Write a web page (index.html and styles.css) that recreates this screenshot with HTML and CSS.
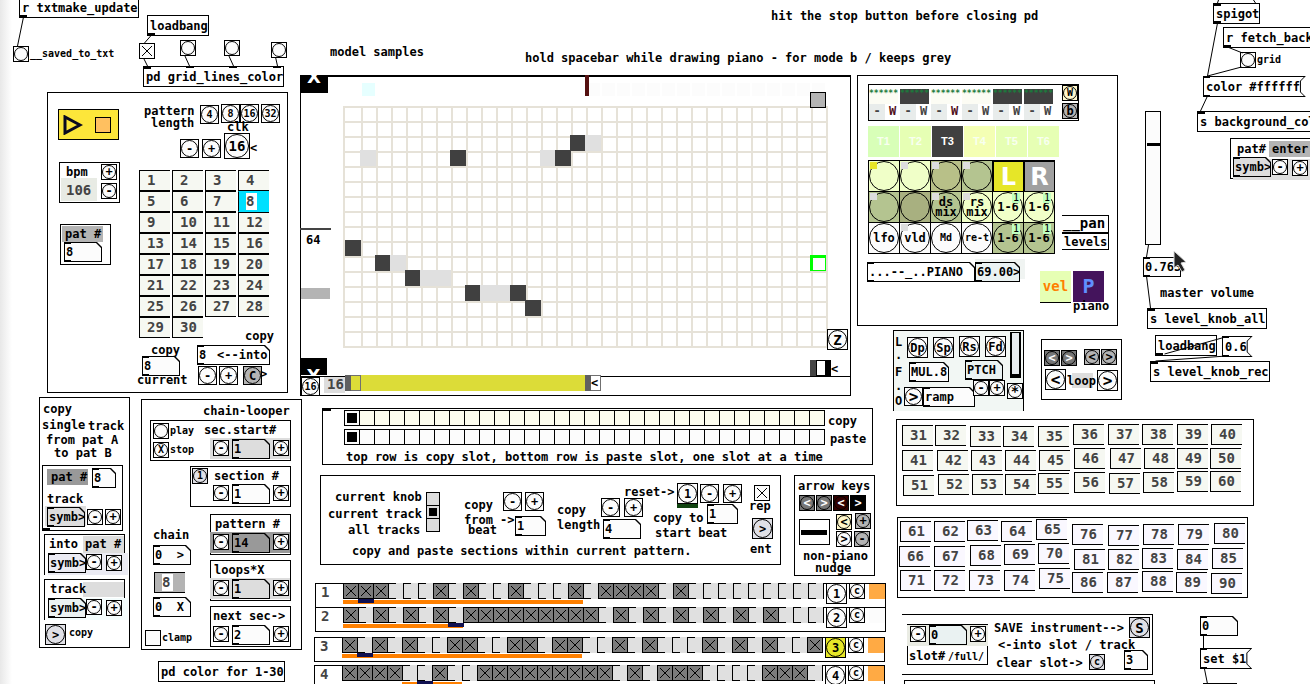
FILE: index.html
```
<!DOCTYPE html>
<html lang="en">
<head>
    <meta charset="UTF-8">
    <meta name="viewport" content="width=device-width, initial-scale=1.0">
    <title>Pattern sequencer</title>
    <link rel="stylesheet" href="styles.css">
</head>
<body>
    <main id="patch"></main>
    <script src="patch.js"></script>
</body>
</html>
```
FILE: styles.css
```
*{
    box-sizing: border-box;
    margin: 0;
    padding: 0;
}
body{
    background: linear-gradient(to right, #e8e8e8, #fff 12px);
    font: bold 12px/14px "DejaVu Sans Mono", monospace;
    color: #000;
}
button,
input{
    font: inherit;
    color: inherit;
    border-radius: 0;
    appearance: none;
}
#patch{
    position: relative;
    min-height: 100vh;
    overflow: hidden;
}
/* every object has its own place in the patch */
.node{
    position: absolute;
}
.wires{
    left: 0;
    top: 0;
    width: 100%;
    height: 100%;
    stroke: #000;
    fill: none;
    pointer-events: none;
}
.txt{
    white-space: pre;
}
.small{
    font-size: 10px;
}
.big{
    font-size: 14px;
    color: #444;
}
.black{
    color: #000;
}
.panel{
    border: 1px solid #000;
    background: #fff;
}
.open-left{
    border-left: 0;
}
.open-bottom{
    border-bottom: 0;
}
.thick-top{
    border-top-width: 2px;
}
.pale{
    background: #f2f7f4;
}
.arrow-end{
    overflow: hidden;
    background: #000;
    color: #fff;
    text-align: center;
    font: bold 18px/18px "DejaVu Sans", sans-serif;
}
.arrow-end.top{
    line-height: 4px;
}
.arrow-end.bottom{
    line-height: 36px;
}

/* object and message boxes */
.obj{
    height: 21px;
    padding: 3px 0 0 2px;
    border: 1px solid #000;
    background: #fff;
    white-space: pre;
}
.in::before,
.out::after,
.nbx::before,
.nbx::after{
    content: "";
    position: absolute;
    z-index: 1;
    left: 0;
    width: 7px;
    height: 2px;
    background: #000;
}
.in::before,
.nbx::before{
    top: 0;
}
.out::after,
.nbx::after{
    bottom: 0;
}
.msg{
    height: 21px;
    padding: 1px;
    background: #000;
    clip-path: polygon(0 0, 100% 0, calc(100% - 5px) 5px, calc(100% - 5px) 16px, 100% 100%, 0 100%);
}
.msg button{
    display: block;
    height: 19px;
    padding: 0 5px 0 2px;
    border: 0;
    background: #fff;
    clip-path: polygon(0 0, calc(100% - 1px) 0, calc(100% - 5px) 4px, calc(100% - 5px) 15px, calc(100% - 1px) 100%, 0 100%);
}

/* number boxes */
.nbx{
    height: 20px;
    padding: 1px;
    background: #000;
    clip-path: polygon(0 0, calc(100% - 5px) 0, 100% 5px, 100% 100%, 0 100%);
}
.nbx input{
    display: block;
    width: 100%;
    height: 18px;
    padding-left: 1px;
    border: 0;
    background: #fcfcfc;
    clip-path: polygon(0 0, calc(100% - 5px) 0, 100% 5px, 100% 100%, 0 100%);
}
.nbx.wide input{
    background: #fff;
}
.nbx.grey input{
    background: #ddd;
}
.nbx.dark input{
    background: #999;
}
.nbx.lilac input{
    background: #ebebf3;
}
.nbx.mint input{
    background: #eaf2f2;
}

/* bangs */
.bang{
    display: flex;
    align-items: center;
    justify-content: center;
    width: 16px;
    height: 16px;
    border: 1px solid #000;
    background: #fcfcfc;
    line-height: 12px;
}
.bang::before{
    content: "";
    position: absolute;
    inset: 0;
    border: 1px solid #000;
    border-radius: 50%;
}
.b18{
    width: 19px;
    height: 19px;
}
.b21{
    width: 21px;
    height: 21px;
}
.b26{
    width: 26px;
    height: 26px;
}
.b26,
.mid-size{
    font-size: 14px;
}
.large{
    font-size: 16px;
}
.silver{
    background: #e0e0e6;
}
.mid{
    background: #b4b4b4;
}
.cream{
    background: #fff8cc;
}
.lit{
    background: #e6e628;
}
.slate{
    background: #777;
    color: #fff;
}
.wine{
    background: #300;
    color: #fff;
}
.ink{
    background: #000;
    color: #fff;
}

/* toggles */
.tgl{
    display: block;
    width: 16px;
    height: 16px;
    border: 1px solid #000;
    background: #fcfcfc;
}
.tgl:checked,
.steps input:checked{
    background-image:
        linear-gradient(to top right, transparent 47%, #000 47%, #000 53%, transparent 53%),
        linear-gradient(to bottom right, transparent 47%, #000 47%, #000 53%, transparent 53%);
    background-repeat: no-repeat;
    background-position: center;
    background-size: 10px 10px;
}

/* pattern pads */
.pad{
    width: 31px;
    height: 21px;
    padding-left: 7px;
    border: 1px solid #000;
    border-right: 0;
    background: #f6f8f2;
    font-size: 14px;
    line-height: 19px;
    text-align: left;
    color: #444;
}
.pad.violet{
    background: #faf8ff;
}
.pad.off{
    background: #b4b4b4;
}
.pad.on{
    background: #00e0ff;
    border-color: #00e0ff;
    border-left-color: #000;
}
.pad.on span,
.pad.off span{
    display: inline-block;
    width: 11px;
    height: 17px;
    line-height: 17px;
    background: #fff;
}
.pads{
    display: grid;
    grid-template-columns: repeat(4, 31px);
    column-gap: 2px;
}

/* colour blocks */
.c-bpm{background: #e8ebe4;}
.c-grey{background: #b4b4b4;}
.c-dark{background: #999;}
.c-light{background: #ddd;}
.c-lilac{background: #ebebf3;}
.c-mint{background: #f4fdfd;}
.c-cyan{background: #e6ffff;}
.c-red{background: #551111;}
.c-green{background: #114411;}
.c-black{background: #000;}
.c-char{background: #444;}
.c-mist{background: #f0f4f2;}
.c-slot{background: #eaece4; border-top: 1px solid #000;}
.c-faint{
    background: repeating-linear-gradient(to right, #fcfcfc 0, #fcfcfc 13px, #fff 13px, #fff 15px);
}

.play{
    display: flex;
    align-items: center;
    justify-content: space-between;
    padding: 0 7px 0 4px;
    border: 1px solid #000;
    background: #fde63a;
}
.play svg{
    width: 20px;
    height: 20px;
}
.play i{
    width: 16px;
    height: 16px;
    border: 1px solid #000;
    background: #ffc060;
}

/* piano roll */
.roll{
    display: grid;
    grid-template-columns: repeat(32, 15px);
    grid-template-rows: repeat(16, 15px);
    padding-left: 3px;
    border-left: 2px solid #e6e2d8;
    border-bottom: 2px solid #e6e2d8;
    background:
        repeating-linear-gradient(to right, transparent 0, transparent 13px, #e6e2d8 13px, #e6e2d8 15px) content-box,
        repeating-linear-gradient(to bottom, #e6e2d8 0, #e6e2d8 2px, transparent 2px, transparent 15px) padding-box;
}
.note{
    width: 16px;
    height: 16px;
    margin: -1px 0 0 -3px;
    background: #404040;
}
.note.tail{
    background: #e0e0e0;
}
.note.cursor{
    border: 1px solid #0f0;
    border-width: 3px 1px 1px 3px;
    background: #fff;
}
.range{
    display: flex;
    width: 256px;
    height: 16px;
    background: #dcdc38;
}
.range i{
    width: 6px;
    background: #606060;
}
.range b{
    width: 10px;
    border: 1px solid #707070;
    border-left: 0;
}
.range .end{
    margin-left: auto;
}
.range .tip{
    background: #fff;
    line-height: 14px;
}

/* sliders */
.vsl{
    border: 1px solid #000;
    background: #fcfcfc;
    writing-mode: vertical-lr;
    direction: rtl;
}
.vsl::-webkit-slider-thumb{
    appearance: none;
    width: 13px;
    height: 3px;
    background: #000;
}
.vsl.lfo{
    border-width: 1px 2px;
    background: #e8ecf0;
}
.vsl.lfo::-webkit-slider-thumb{
    width: 7px;
}

/* track slots */
.slots{
    display: grid;
    grid-template-columns: repeat(6, 31px);
    padding-left: 1px;
}
.slot{
    display: grid;
    grid-template-columns: 16px 15px;
    grid-template-rows: 19px 16px;
    color: #444;
    text-align: center;
    line-height: 15px;
}
.slot i{
    grid-column: 1 / 3;
    margin: 4px 2px 0 0;
    font: bold 8px/10px "DejaVu Sans Mono", monospace;
    color: #1c7a3c;
    background: #fcfcf4;
}
.slot.filled i{
    background: #404040;
}
.slot b{
    background: #e8eceb;
}
.slot em{
    font-style: normal;
}
.slot.used em{
    color: #501020;
}
.tabs{
    display: grid;
    grid-template-columns: repeat(6, 31px);
    column-gap: 1px;
}
.tabs button{
    height: 31px;
    border: 0;
    background: #e6ffb4;
    color: #f8fff0;
    font: bold 11px/31px "Liberation Sans", sans-serif;
}
.tabs .t1{background: #d8ffb8;}
.tabs .t3{background: #404040; color: #fff;}
.tabs .t4{background: #f4ffb4;}

/* knobs */
.knobs{
    display: grid;
    grid-template-columns: repeat(6, 31px);
    border-right: 1px solid #000;
    border-bottom: 1px solid #000;
}
.knob{
    position: relative;
    display: flex;
    align-items: center;
    justify-content: center;
    height: 31px;
    border: 1px solid #000;
    border-right: 0;
    border-bottom: 0;
    background: #fcfcfc;
    line-height: 10px;
}
.knob::before{
    content: "";
    position: absolute;
    inset: 0;
    border: 1px solid #000;
    border-radius: 50%;
}
.knob i{
    position: absolute;
    left: 1px;
    top: 1px;
    width: 7px;
    height: 7px;
    background: #ddd;
}
.knob i.lit{
    background: #e6e628;
}
.knob u{
    position: absolute;
    right: 3px;
    top: 1px;
    width: 8px;
    background: #c0ffc0;
    font-weight: normal;
    font-size: 10px;
    text-decoration: none;
}
.knob.lime{background: #f0ffc8;}
.knob.olive{background: #b8c088;}
.knob.sage{background: #b4c490;}
.knob.moss{background: #a8b080;}
.knob.left{background: #e6e628;}
.knob.right{background: #a0a0a0;}
.knob.left,
.knob.right{
    border-width: 2px 1px 1px 2px;
    color: #fff;
    font: bold 24px/24px "DejaVu Sans", sans-serif;
}
.knob.left::before,
.knob.right::before{
    display: none;
}
.tile{
    width: 31px;
    height: 31px;
    border: 0;
    font-size: 14px;
}
.tile.vel{
    background: #e6ffb4;
    color: #ff8000;
    line-height: 23px;
    box-shadow: 0 1px #000;
}
.tile.inst{
    background: #44145c;
    color: #6090ff;
    font-size: 20px;
    line-height: 25px;
}

/* radio rows */
.radio{
    display: flex;
    border: 1px solid #000;
}
.radio input{
    width: 15px;
    height: 14px;
    border-right: 1px solid #000;
    background: #fcfcfc;
}
.radio input:last-child{
    width: 14px;
    border-right: 0;
}
.radio.ivory input{
    background: #fcfcee;
}
.radio input:checked{
    background: #fcfcfc linear-gradient(#000, #000) no-repeat center / 10px 10px;
}
.radio.col{
    flex-direction: column;
}
.radio.col input{
    width: 12px;
    height: 13px;
    border-right: 0;
    border-bottom: 1px solid #000;
    background-color: #ddd;
}
.radio.col input:last-child{
    height: 12px;
    border-bottom: 0;
}
.radio.col input:checked{
    background-size: 8px 8px;
}

/* tracks */
.track{
    display: flex;
    align-items: flex-start;
    width: 571px;
    height: 25px;
    border: 1px solid #000;
    background: #fff;
}
.track > span{
    width: 27px;
    padding-left: 5px;
    font-size: 14px;
    line-height: 17px;
    color: #444;
}
.steps{
    position: relative;
    display: flex;
    margin-top: -1px;
    border-right: 1px solid #000;
}
.steps input{
    width: 15px;
    height: 16px;
    border-left: 1px solid #000;
    background:
        linear-gradient(#000, #000) no-repeat left top / 7px 1px,
        linear-gradient(#000, #000) no-repeat left bottom / 7px 1px,
        #e0e0e0;
}
.steps input:checked{
    border-top: 1px solid #000;
    border-bottom: 1px solid #000;
    background-color: #7c7c7c;
}
.loop,
.head{
    position: absolute;
    top: 17px;
    height: 4px;
    background: #ff8000;
}
.head{
    top: 16px;
    width: 16px;
    background: #101050;
}
.track .bang{
    position: relative;
    margin: -1px 0 0 2px;
}
.track .light{
    width: 16px;
    height: 15px;
    margin-left: auto;
    background: #ffaa44;
}
.track.idle .light{
    background: #fcfcfc;
}
```
FILE: patch.js
```
var patch = document.getElementById("patch");

// create an element and put it at its place in the patch
function node(tag, cls, x, y, w, h){
    var el = document.createElement(tag);
    el.className = "node " + cls;
    el.style.left = x + "px";
    el.style.top = y + "px";
    if(w) el.style.width = w + "px";
    if(h) el.style.height = h + "px";
    patch.appendChild(el);
    return el;
}
// y is the middle of the letters
function txt(x, y, str, cls){
    node("span", "txt " + (cls || ""), x, y - 7).textContent = str;
}
function panel(x, y, w, h, cls){
    node("div", "panel " + (cls || ""), x, y, w, h);
}
function rect(x, y, w, h, cls){
    node("div", cls, x, y, w, h);
}
function obj(x, y, str, cls){
    node("div", "obj " + (cls || ""), x, y).textContent = str;
}
function msg(x, y, str){
    node("div", "msg in out", x, y).innerHTML = "<button>" + str + "</button>";
}
function bang(x, y, label, cls){
    var b = node("button", "bang " + (cls || ""), x, y);
    b.textContent = label || "";
    if(!label) b.setAttribute("aria-label", "bang");
}
function nbx(x, y, w, value, cls){
    var n = node("div", "nbx " + (cls || ""), x, y, w);
    n.innerHTML = '<input type="text" aria-label="number" value="' + value + '">';
}
function pad(x, y, n, cls){
    node("button", "pad " + (cls || ""), x, y).innerHTML = "<span>" + n + "</span>";
}
function toggle(x, y, on, name){
    var t = node("input", "tgl", x, y);
    t.type = "checkbox";
    t.checked = on;
    t.setAttribute("aria-label", name);
}
function radio(x, y, name, count, chosen, cls){
    var html = "";
    for(var i = 0; i < count; i++){
        html += '<input type="radio" name="' + name + '" aria-label="' + name + " " + (i + 1) + '"' + (i == chosen ? " checked" : "") + ">";
    }
    node("div", "radio " + (cls || ""), x, y).innerHTML = html;
}
function vslider(x, y, w, h, value, cls){
    var s = node("input", "vsl " + (cls || ""), x, y, w, h);
    s.type = "range";
    s.value = value;
    s.setAttribute("aria-label", "level");
}
// minus, number and plus, as used all over the chain looper
function stepper(y, value, cls, back){
    if(back) rect(210, y - 1, 80, 21, back);
    bang(213, y + 1, "-");
    nbx(232, y, 38, value, cls);
    bang(273, y + 1, "+");
}

// top left
obj(19, -3, "r txtmake_update", "out");
bang(13, 46);
txt(30, 54, "__saved_to_txt", "small");
obj(147, 15, "loadbang", "out");
toggle(139, 43, true, "grid lines");
bang(180, 40);
bang(224, 40);
bang(271, 42);
obj(143, 66, "pd grid_lines_color", "in");
rect(186, 66, 8, 2, "c-black");
rect(229, 66, 8, 2, "c-black");
rect(273, 66, 8, 2, "c-black");
txt(771, 16, "hit the stop button before closing pd");
txt(330, 52, "model samples");
txt(525, 58, "hold spacebar while drawing piano - for mode b / keeps grey");

// transport and patterns 1-30
panel(47, 92, 241, 301);
node("button", "play", 58, 109, 61, 31).innerHTML =
    '<svg viewBox="0 0 20 20" aria-label="play"><path d="M2 2V18L17 10Z" fill="#fde63a" stroke="#0a0a20" stroke-width="3"/></svg><i></i>';
txt(144, 111, "pattern");
txt(151, 123, "length");
bang(200, 105, "4", "b18 small");
bang(221, 104, "8", "b18 small");
bang(240, 104, "16", "b18 small");
bang(261, 104, "32", "b18 small");
txt(227, 127, "clk");
bang(180, 139, "-", "b18");
bang(202, 139, "+", "b18");
bang(224, 133, "16", "b26");
txt(250, 148, "<");
panel(59, 162, 61, 41);
txt(66, 172, "bpm");
rect(61, 178, 36, 23, "c-bpm");
txt(66, 190, "106", "big");
bang(101, 164, "+");
bang(101, 183, "-");
panel(60, 224, 51, 41);
rect(62, 226, 41, 16, "c-grey");
txt(65, 234, "pat #");
nbx(64, 242, 38, "8");

var pads = "";
for(var i = 1; i <= 30; i++){
    pads += '<button class="pad' + (i == 8 ? " on" : "") + '"><span>' + i + "</span></button>";
}
node("div", "pads", 139, 170).innerHTML = pads;
txt(245, 336, "copy");
txt(151, 350, "copy");
nbx(142, 356, 38, "8");
txt(137, 380, "current");
nbx(197, 345, 73, "8", "wide");
txt(217, 355, "<--into");
bang(198, 366, "-", "b18");
bang(219, 366, "+", "b18");
bang(243, 366, "C", "b18 mid");
txt(260, 374, ">");

// copy single track
panel(39, 397, 91, 251);
txt(43, 409, "copy");
txt(42, 425, "single");
txt(88, 426, "track");
txt(46, 440, "from pat A");
txt(54, 453, "to pat B");
panel(42, 465, 81, 66);
rect(47, 469, 41, 16, "c-dark");
txt(51, 477, "pat #");
nbx(92, 468, 24, "8");
txt(47, 499, "track");
rect(45, 506, 41, 20, "c-light");
nbx(47, 507, 38, "symb>", "grey");
rect(43, 528, 7, 3, "c-black");
bang(87, 509, "-");
bang(105, 509, "+");
panel(44, 534, 81, 41, "open-bottom");
rect(83, 536, 41, 17, "c-light");
txt(49, 544, "into pat #");
rect(48, 553, 80, 22, "c-lilac");
nbx(48, 553, 38, "symb>", "lilac");
bang(86, 554, "-");
bang(106, 555, "+");
panel(44, 579, 81, 41, "open-bottom");
rect(83, 582, 41, 15, "c-light");
txt(50, 589, "track");
rect(48, 598, 80, 22, "c-mint");
nbx(48, 598, 38, "symb>", "mint");
bang(86, 599, "-");
bang(106, 600, "+");
bang(45, 624, ">", "b21 silver");
txt(69, 633, "copy", "small");

// chain looper
panel(141, 399, 161, 251);
txt(203, 411, "chain-looper");
panel(150, 420, 141, 41);
bang(153, 423);
txt(170, 431, "play", "small");
bang(153, 442, "X", "small");
txt(170, 450, "stop", "small");
txt(204, 430, "sec.start#");
stepper(439, "1", "grey", "c-light");
panel(190, 466, 101, 41);
bang(192, 468, "1", "small silver");
txt(214, 476, "section #");
stepper(484, "1");
panel(210, 514, 81, 41);
txt(215, 524, "pattern #");
stepper(533, "14", "dark", "c-dark");
panel(210, 560, 81, 41);
txt(214, 570, "loops*X");
stepper(579, "1", "grey", "c-light");
panel(210, 606, 81, 41);
txt(213, 616, "next sec->");
stepper(625, "2");
txt(153, 535, "chain");
nbx(153, 545, 38, "0  &gt;");
pad(154, 572, 8, "off");
nbx(153, 597, 38, "0  X");
toggle(145, 630, false, "clamp");
txt(162, 638, "clamp", "small");
obj(158, 661, "pd color for 1-30");

// piano roll
panel(300, 75, 551, 321, "thick-top");
rect(300, 376, 551, 1, "c-black");
node("div", "arrow-end top", 300, 75, 28, 18).textContent = "X";
node("div", "arrow-end bottom", 300, 358, 27, 17).textContent = "X";
rect(362, 83, 13, 13, "c-cyan");
rect(587, 83, 238, 13, "c-faint");
rect(585, 75, 4, 21, "c-red");
rect(300, 228, 31, 2, "c-char");
txt(306, 240, "64");
rect(301, 288, 29, 11, "c-grey");

// column, row, kind
var notes = [
    [15, 2], [16, 2, "tail"],
    [1, 3, "tail"], [7, 3], [13, 3, "tail"], [14, 3],
    [0, 9],
    [2, 10], [3, 10, "tail"], [31, 10, "cursor"],
    [4, 11], [5, 11, "tail"], [6, 11, "tail"],
    [8, 12], [9, 12, "tail"], [10, 12, "tail"], [11, 12],
    [12, 13]
];
var roll = node("div", "roll", 343, 106);
notes.forEach(function(n){
    var el = document.createElement("div");
    el.className = "note " + (n[2] || "");
    el.style.gridColumn = n[0] + 1;
    el.style.gridRow = n[1] + 1;
    roll.appendChild(el);
});
panel(810, 92, 16, 16, "mid");
bang(301, 377, "16", "b18 small");
rect(324, 377, 21, 16, "c-light");
txt(327, 384, "16", "big");
node("div", "range", 345, 375).innerHTML = '<i></i><b></b><i class="end"></i><b class="tip">&lt;</b>';
bang(827, 329, "Z", "b21 mid-size");
rect(810, 360, 6, 16, "c-char");
panel(816, 360, 10, 16);
rect(826, 360, 5, 16, "c-black");
txt(831, 369, "<");

// track and knob panel
panel(857, 75, 261, 251);
panel(868, 84, 211, 37);
var slots = "";
["used", "filled", "used", "", "filled", "filled"].forEach(function(kind){
    slots += '<div class="slot ' + kind + '"><i>******</i><b>-</b><em>W</em></div>';
});
node("div", "slots", 868, 85).innerHTML = slots;
bang(1062, 85, "W", "small cream");
bang(1062, 103, "b", "mid");
var tabs = "";
for(i = 1; i <= 6; i++){
    tabs += '<button class="t' + i + '">T' + i + "</button>";
}
node("div", "tabs", 868, 126).innerHTML = tabs;

// colour, label, corner mark
var knobs = [
    ["lime", "", '<i class="lit"></i>'], ["lime", "", "<i></i>"], ["olive", "", "<i></i>"], ["sage", "", "<i></i>"], ["left", "L"], ["right", "R"],
    ["sage", "", "<i></i>"], ["moss", ""], ["sage", "ds<br>mix", "<i></i>"], ["lime", "rs<br>mix", "<i></i>"], ["lime", "1-6", "<u>1</u>"], ["lime", "1-6", "<u>1</u>"],
    ["", "lfo"], ["", "vld", "<i></i>"], ["small", "Md"], ["small", "re-t"], ["sage", "1-6", "<u>1</u>"], ["sage", "1-6", "<u>1</u>"]
];
node("div", "knobs", 868, 160).innerHTML = knobs.map(function(k, n){
    return '<button class="knob ' + k[0] + '" aria-label="' + (k[1].replace("<br>", " ") || "knob " + (n + 1)) + '">' + k[1] + (k[2] || "") + "</button>";
}).join("");
panel(1062, 215, 47, 18, "open-left");
txt(1063, 223, "__pan", "big black");
panel(1062, 233, 47, 17, "open-left");
txt(1064, 242, "levels");
nbx(867, 262, 108, "...--_..PIANO", "wide");
rect(975, 259, 50, 20, "c-mist");
nbx(975, 262, 45, "69.00>", "mint");
node("button", "tile vel", 1040, 271).textContent = "vel";
node("button", "tile inst", 1073, 271).textContent = "P";
txt(1073, 306, "piano");

// lfo
panel(893, 330, 131, 81, "pale open-bottom");
txt(895, 342, "L");
txt(895, 355, ".");
txt(895, 372, "F");
txt(895, 386, ".");
txt(895, 401, "O");
bang(907, 337, "Dp", "b21");
bang(933, 337, "Sp", "b21");
bang(959, 336, "Rs", "b21");
bang(985, 336, "Fd", "b21");
vslider(1010, 332, 11, 46, 0, "lfo");
nbx(909, 362, 40, "MUL.8");
nbx(965, 360, 38, "PTCH", "mint");
bang(904, 387, ">", "b18 large");
nbx(923, 387, 52, "ramp");
bang(973, 380, "-");
bang(989, 380, "+");
bang(1007, 383, "*", "mid-size");

// loop
panel(1041, 339, 81, 61);
bang(1044, 350, "<", "slate");
bang(1061, 350, ">", "slate");
bang(1084, 349, "<", "mid");
bang(1101, 349, ">", "mid");
bang(1045, 369, "<", "b21 large");
rect(1072, 373, 21, 15, "c-light");
txt(1067, 381, "loop");
bang(1097, 370, ">", "b21 large");

// copy and paste slots
panel(322, 408, 551, 57);
rect(323, 408, 8, 3, "c-black");
radio(344, 410, "copy slot", 32, 0, "ivory");
radio(344, 429, "paste slot", 32, 0);
txt(828, 421, "copy");
txt(830, 439, "paste");
txt(346, 457, "top row is copy slot, bottom row is paste slot, one slot at a time");

// copy sections
panel(320, 475, 461, 90);
txt(335, 497, "current knob");
txt(328, 514, "current track");
txt(348, 530, "all tracks");
radio(426, 492, "section scope", 3, 1, "col");
txt(464, 505, "copy");
txt(464, 520, "from ->");
txt(468, 530, "beat");
bang(503, 492, "-", "b18");
bang(525, 492, "+", "b18");
nbx(515, 516, 31, "1");
txt(557, 510, "copy");
txt(557, 525, "length");
bang(601, 498, "-", "b18");
bang(624, 498, "+", "b18");
nbx(603, 519, 38, "4");
txt(624, 492, "reset->");
rect(677, 502, 21, 6, "c-green");
bang(677, 483, "1", "b21");
bang(700, 484, "-", "b18");
bang(723, 484, "+", "b18");
txt(653, 518, "copy to");
nbx(707, 504, 31, "1");
txt(655, 533, "start beat");
toggle(754, 485, true, "rep");
txt(749, 506, "rep");
bang(752, 518, ">", "b21 silver");
txt(750, 549, "ent");
txt(352, 551, "copy and paste sections within current pattern.");

// arrow keys and nudge
panel(794, 475, 81, 101);
txt(798, 486, "arrow keys");
bang(799, 495, "<", "slate");
bang(816, 495, ">", "slate");
bang(833, 495, "<", "wine");
bang(850, 495, ">", "ink");
panel(799, 519, 31, 26);
rect(801, 530, 26, 5, "c-black");
bang(836, 514, "<", "cream");
bang(855, 513, "+", "mid");
bang(836, 531, ">");
bang(854, 531, "-", "mid");
txt(803, 556, "non-piano");
txt(815, 568, "nudge");

// tracks: place, number, steps that are on, loop start and end, play position, in steps
var tracks = [
    [315, 583, 1, [0, 1, 2, 6, 8, 11, 15, 17, 18, 19, 20, 22], 0, 16, 1],
    [315, 607, 2, [0, 2, 4, 6, 8, 9, 10, 11, 12, 13, 14, 15, 16, 18, 20, 22, 24, 26, 28], 0, 8, 7],
    [314, 637, 3, [0, 2, 4, 7, 8, 11, 12, 14, 15, 18, 20, 24, 26, 28, 31], 0, 16, 1],
    [314, 665, 4, [0, 1, 2, 3, 6, 9, 10, 11, 12, 13, 14, 15, 16, 17, 19, 21, 22, 23, 28, 29, 30], 4, 8, 5]
];
tracks.forEach(function(t){
    var html = "<span>" + t[2] + '</span><div class="steps">';
    for(var s = 0; s < 32; s++){
        html += '<input type="checkbox" aria-label="track ' + t[2] + " step " + (s + 1) + '"' + (t[3].indexOf(s) >= 0 ? " checked" : "") + ">";
    }
    html += '<i class="loop" style="left:' + t[4] * 15 + "px;width:" + (t[5] - t[4]) * 15 + 'px"></i>';
    html += '<i class="head" style="left:' + t[6] * 15 + 'px"></i></div>';
    html += '<button class="bang b21' + (t[2] == 3 ? " lit" : "") + '">' + t[2] + "</button>";
    html += '<button class="bang small">c</button><i class="light"></i>';
    node("div", "track" + (t[2] == 2 ? " idle" : ""), t[0], t[1]).innerHTML = html;
});

// patterns 31-60
panel(896, 419, 358, 87);
[
    [31, 902, 425], [32, 935, 425], [33, 970, 426], [34, 1003, 426], [35, 1038, 426],
    [36, 1073, 424], [37, 1108, 424], [38, 1142, 424], [39, 1177, 424], [40, 1211, 424],
    [41, 902, 450], [42, 937, 450], [43, 971, 450], [44, 1005, 450], [45, 1039, 450],
    [46, 1074, 448], [47, 1110, 448], [48, 1144, 448], [49, 1177, 448], [50, 1210, 448],
    [51, 903, 475], [52, 938, 474], [53, 972, 474], [54, 1005, 474], [55, 1038, 473],
    [56, 1074, 472], [57, 1109, 473], [58, 1143, 472], [59, 1177, 471], [60, 1210, 471]
].forEach(function(p){
    pad(p[1], p[2], p[0]);
});

// patterns 61-90
panel(897, 517, 351, 81);
[
    [61, 900, 521], [62, 934, 521], [63, 967, 520], [64, 1001, 521], [65, 1036, 519],
    [76, 1072, 524], [77, 1108, 525], [78, 1143, 524], [79, 1178, 524], [80, 1214, 523],
    [66, 899, 546], [67, 934, 546], [68, 970, 545], [69, 1004, 544], [70, 1038, 543],
    [81, 1074, 549], [82, 1108, 549], [83, 1142, 548], [84, 1177, 549], [85, 1212, 548],
    [71, 900, 570], [72, 934, 570], [73, 969, 570], [74, 1004, 570], [75, 1039, 568],
    [86, 1072, 572], [87, 1107, 572], [88, 1142, 571], [89, 1176, 572], [90, 1211, 573]
].forEach(function(p){
    pad(p[1], p[2], p[0], "violet");
});

// save instrument
panel(902, 614, 251, 61, "open-left");
panel(907, 645, 81, 20);
rect(907, 624, 81, 22, "c-slot");
bang(910, 626, "-");
nbx(929, 625, 38, "0", "mint");
bang(970, 626, "+");
txt(909, 656, "slot#");
txt(948, 657, "/full/", "small");
txt(994, 628, "SAVE instrument-->");
txt(998, 645, "<-into slot / track");
txt(996, 663, "clear slot->");
bang(1129, 617, "S", "b21 silver mid-size");
bang(1089, 654, "c", "small silver");
nbx(1124, 650, 24, "3");
panel(904, 680, 251, 20);

// right side
obj(1213, 3, "spigot", "in out");
obj(1223, 27, "r fetch_background", "out");
bang(1240, 52);
txt(1257, 60, "grid", "small");
msg(1203, 76, "color #ffffff");
obj(1197, 111, "s background_color", "in");
panel(1230, 138, 120, 41);
txt(1237, 149, "pat#");
rect(1269, 141, 60, 16, "c-grey");
txt(1272, 149, "enter");
rect(1233, 159, 90, 21, "c-light");
nbx(1233, 157, 38, "symb>", "grey");
bang(1272, 159, "-");
bang(1292, 160, "+");
vslider(1145, 111, 16, 134, 76, "");
nbx(1143, 257, 38, "0.763");
txt(1160, 293, "master volume");
obj(1147, 308, "s level_knob_all", "in");
obj(1155, 335, "loadbang", "out");
msg(1222, 336, "0.6");
obj(1150, 361, "s level_knob_rec", "in");
nbx(1200, 616, 38, "0");
msg(1200, 648, "set $1");
rect(1203, 683, 34, 1, "c-black");

// patch cords: x1, y1, x2, y2
var cords = [
    [23, 17, 17, 46], [151, 35, 144, 43], [143, 58, 147, 66], [184, 55, 189, 66], [228, 55, 233, 66], [275, 57, 277, 66],
    [1217, 3, 1218, 0], [1255, 3, 1253, 0], [1217, 23, 1207, 76], [1227, 47, 1242, 53], [1241, 67, 1207, 76], [1207, 96, 1200, 111],
    [1148, 245, 1146, 257], [1146, 276, 1150, 308], [1164, 354, 1225, 337], [1226, 356, 1155, 361],
    [1203, 636, 1203, 648], [1204, 669, 1207, 684]
];
var svg = '<svg class="node wires" aria-hidden="true">';
cords.forEach(function(c){
    svg += '<line x1="' + (c[0] + 0.5) + '" y1="' + c[1] + '" x2="' + (c[2] + 0.5) + '" y2="' + c[3] + '"/>';
});
// mouse pointer
svg += '<path d="M1174 251V268L1178 265L1182 272L1185 270L1181 263L1186 262Z" fill="#222" stroke="#ddd"/></svg>';
patch.insertAdjacentHTML("beforeend", svg);
```
